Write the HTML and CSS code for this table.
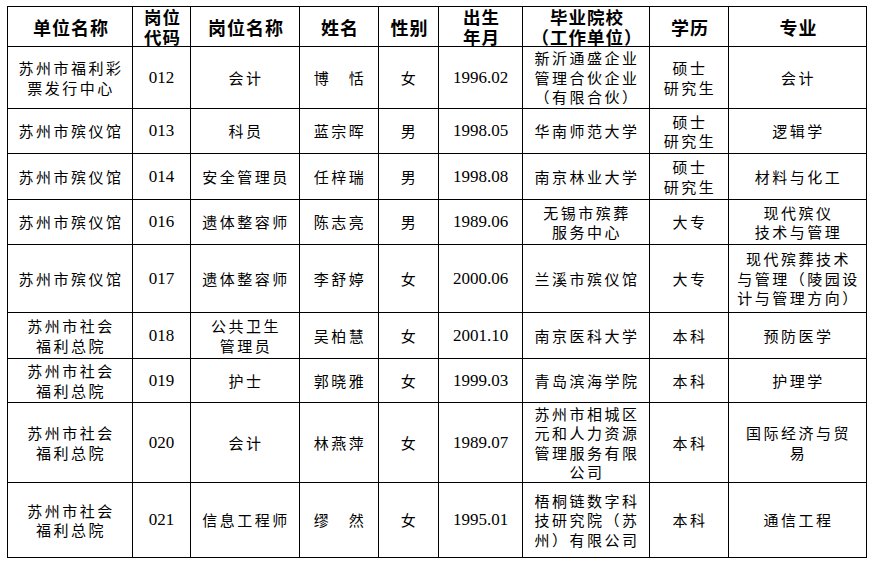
FILE: index.html
```html
<!DOCTYPE html>
<html lang="zh-CN">
<head>
<meta charset="utf-8">
<title>岗位表</title>
<link rel="stylesheet" href="styles.css">
</head>
<body>
<div class="page">
<table class="roster">
  <colgroup>
    <col class="c1"><col class="c2"><col class="c3"><col class="c4"><col class="c5"><col class="c6"><col class="c7"><col class="c8"><col class="c9">
  </colgroup>
  <thead>
    <tr class="h">
      <th>单位名称</th><th class="two">岗位<br>代码</th><th>岗位名称</th><th>姓名</th><th>性别</th><th class="two">出生<br>年月</th><th class="two">毕业院校<br>（工作单位）</th><th>学历</th><th>专业</th>
    </tr>
  </thead>
  <tbody>
    <tr class="r1">
      <td>苏州市福利彩<br>票发行中心</td><td class="num">012</td><td>会计</td><td>博　恬</td><td>女</td><td class="num">1996.02</td><td>新沂通盛企业<br>管理合伙企业<br>（有限合伙）</td><td>硕士<br>研究生</td><td>会计</td>
    </tr>
    <tr class="r2">
      <td>苏州市殡仪馆</td><td class="num">013</td><td>科员</td><td>蓝宗晖</td><td>男</td><td class="num">1998.05</td><td>华南师范大学</td><td>硕士<br>研究生</td><td>逻辑学</td>
    </tr>
    <tr class="r3">
      <td>苏州市殡仪馆</td><td class="num">014</td><td>安全管理员</td><td>任梓瑞</td><td>男</td><td class="num">1998.08</td><td>南京林业大学</td><td>硕士<br>研究生</td><td>材料与化工</td>
    </tr>
    <tr class="r4">
      <td>苏州市殡仪馆</td><td class="num">016</td><td>遗体整容师</td><td>陈志亮</td><td>男</td><td class="num">1989.06</td><td>无锡市殡葬<br>服务中心</td><td>大专</td><td>现代殡仪<br>技术与管理</td>
    </tr>
    <tr class="r5">
      <td>苏州市殡仪馆</td><td class="num">017</td><td>遗体整容师</td><td>李舒婷</td><td>女</td><td class="num">2000.06</td><td>兰溪市殡仪馆</td><td>大专</td><td>现代殡葬技术<br>与管理（陵园设<br>计与管理方向）</td>
    </tr>
    <tr class="r6">
      <td>苏州市社会<br>福利总院</td><td class="num">018</td><td>公共卫生<br>管理员</td><td>吴柏慧</td><td>女</td><td class="num">2001.10</td><td>南京医科大学</td><td>本科</td><td>预防医学</td>
    </tr>
    <tr class="r7">
      <td>苏州市社会<br>福利总院</td><td class="num">019</td><td>护士</td><td>郭晓雅</td><td>女</td><td class="num">1999.03</td><td>青岛滨海学院</td><td>本科</td><td>护理学</td>
    </tr>
    <tr class="r8">
      <td>苏州市社会<br>福利总院</td><td class="num">020</td><td>会计</td><td>林燕萍</td><td>女</td><td class="num">1989.07</td><td>苏州市相城区<br>元和人力资源<br>管理服务有限<br>公司</td><td>本科</td><td>国际经济与贸<br>易</td>
    </tr>
    <tr class="r9">
      <td>苏州市社会<br>福利总院</td><td class="num">021</td><td>信息工程师</td><td>缪　然</td><td>女</td><td class="num">1995.01</td><td>梧桐链数字科<br>技研究院（苏<br>州）有限公司</td><td>本科</td><td>通信工程</td>
    </tr>
  </tbody>
</table>
</div>
</body>
</html>
```
FILE: styles.css
```css
html, body {
  margin: 0;
  padding: 0;
  background: #ffffff;
}
.page {
  padding: 6px 0 0 7px;
}
.roster {
  border-collapse: collapse;
  table-layout: fixed;
  width: 859px;
  color: #000;
  font-family: "Noto Sans CJK SC", "Liberation Serif", sans-serif;
}
.c1 { width: 125px; }
.c2 { width: 58px; }
.c3 { width: 109px; }
.c4 { width: 79px; }
.c5 { width: 60px; }
.c6 { width: 84px; }
.c7 { width: 127px; }
.c8 { width: 79px; }
.c9 { width: 138px; }
.roster th,
.roster td {
  border: 1px solid #000;
  padding: 0 0 0 2px;
  text-align: center;
  vertical-align: middle;
  white-space: nowrap;
}
.roster th {
  font-size: 18px;
  font-weight: 700;
  line-height: 20px;
  letter-spacing: 1px;
}
.roster th.two {
  font-size: 17.5px;
  line-height: 19.5px;
}
.roster td {
  font-size: 15px;
  font-weight: 400;
  line-height: 19.5px;
  letter-spacing: 2.5px;
  overflow: hidden;
}
.roster td.num {
  font-family: "Liberation Serif", serif;
  font-size: 17px;
  letter-spacing: 0;
  padding-left: 0;
}
.h { height: 40px; }
.r1 { height: 62px; }
.r2 { height: 45px; }
.r3 { height: 46px; }
.r4 { height: 45px; }
.r5 { height: 68px; }
.r6 { height: 46px; }
.r7 { height: 44px; }
.r8 { height: 80px; }
.r9 { height: 75px; }
```
